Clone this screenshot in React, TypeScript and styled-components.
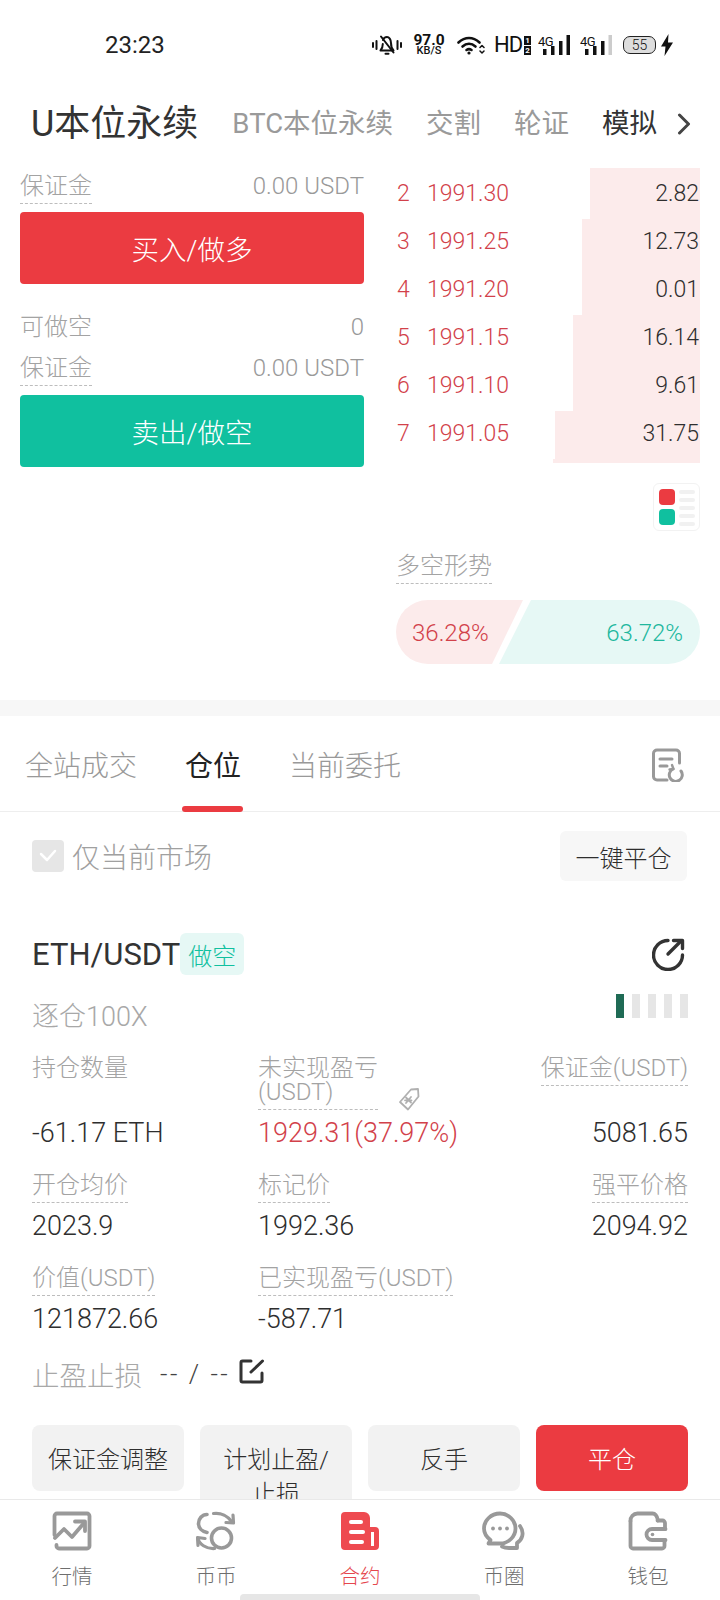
import React from "react";
import styled, { createGlobalStyle } from "styled-components";

const RED = "#eb3b41";
const GREEN = "#10c09f";
const PRICE = "#d2414a";
const GREY = "#a3a3a3";
const DARK = "#2e2e2e";

const Global = createGlobalStyle`
  html, body { margin: 0; padding: 0; background: #fff; }
  * { box-sizing: border-box; }
  body { font-family: Roboto, "Noto Sans CJK SC", sans-serif; font-weight: 300; color: ${DARK}; }
`;

const Page = styled.div`
  width: 720px; height: 1600px; overflow: hidden; display: flex; flex-direction: column; background: #fff;
`;
const Main = styled.main`
  flex: 1; min-height: 0; overflow: hidden;
`;
const StatusBar = styled.div`
  height: 92px; display: flex; align-items: center; padding: 0 47px 2px 105px;
`;
const Clock = styled.span`
  font-size: 24px; font-weight: 400; color: #222;
`;
const StatusIcons = styled.div`
  margin-left: auto; display: flex; align-items: center; gap: 11px; color: #111;
`;
const Speed = styled.div`
  width: 32px; margin-right: 1px; display: flex; flex-direction: column; align-items: center; font-weight: 700; color: #111;
`;
const SpeedValue = styled.span`
  font-size: 15.5px; line-height: 12px;
`;
const SpeedUnit = styled.span`
  font-size: 11px; line-height: 10px; font-weight: 500;
`;
const WifiSlot = styled.span`
  display: flex; margin-right: -2px;
`;
const SignalSlot = styled.span<{ $tight?: boolean }>`
  display: flex; margin-right: ${(p) => (p.$tight ? -1 : 0)}px;
`;
const Hd = styled.div`
  display: flex; align-items: center; gap: 1px; width: 33px; font-size: 22px; font-weight: 400; line-height: 22px; color: #111; letter-spacing: -1px;
`;
const SimStack = styled.div`
  display: flex; flex-direction: column; gap: 1px; margin-left: 1px;
`;
const SimDigit = styled.span`
  width: 7px; height: 9px; background: #111; color: #fff; font-size: 8px; line-height: 9px; text-align: center; letter-spacing: 0; font-weight: 700;
`;
const Battery = styled.div`
  position: relative; width: 33px; height: 18px; border: 1.5px solid #222; border-radius: 7px; background: #ddd; display: flex; align-items: center; justify-content: center; font-size: 14px; font-weight: 300; color: #111;
`;
const Bolt = styled.svg`
  margin-left: -6px;
`;

const TopTabs = styled.nav`
  height: 60px; padding-top: 3px; display: flex; align-items: center; gap: 33px; padding-left: 31px;
`;
const TopTab = styled.span<{ $state?: "main" | "dark" }>`
  font-size: ${(p) => (p.$state === "main" ? 36 : 27.5)}px;
  font-weight: 400;
  line-height: 40px;
  margin-right: ${(p) => (p.$state === "main" ? 1 : 0)}px;
  color: ${(p) => (p.$state ? "#333" : "#9a9a9a")};
  white-space: nowrap;
`;
const Chevron = styled.svg`
  margin-left: -13px;
`;

const Trade = styled.section`
  margin-top: 16px; height: 532px; padding-left: 20px; display: flex; gap: 32px;
`;
const OrderCol = styled.div`
  width: 344px; padding-top: 6px; display: flex; flex-direction: column;
`;
const InfoRow = styled.div<{ $gap?: number }>`
  display: flex; justify-content: space-between; align-items: flex-start; margin-top: ${(p) => p.$gap ?? 0}px;
`;
const Hint = styled.span`
  font-size: 24px; line-height: 24px; color: ${GREY};
`;
const Dashed = styled.span`
  display: inline-block; font-size: 24px; line-height: 24px; color: ${GREY}; padding-bottom: 5px; border-bottom: 1px dashed #bdbdbd; white-space: nowrap;
`;
const InfoValue = styled.span`
  font-size: 24px; line-height: 24px; color: #999;
`;
const TradeButton = styled.button<{ $side: "buy" | "sell" }>`
  display: block; width: 100%; height: 72px; margin-top: ${(p) => (p.$side === "buy" ? 8 : 9)}px; border: 0; border-radius: 4px; color: #fff; font: inherit; font-size: 27.5px;
  background: ${(p) => (p.$side === "buy" ? RED : GREEN)};
`;

const BookCol = styled.div`
  width: 304px; display: flex; flex-direction: column;
`;
const Book = styled.div`
  height: 295px; overflow: hidden; display: flex; flex-direction: column;
`;
const BookRow = styled.div<{ $first?: boolean }>`
  position: relative; flex: none; height: ${(p) => (p.$first ? 51 : 48)}px; padding: ${(p) => (p.$first ? "3px 1px 4px" : "0 1px 4px")};
  display: flex; align-items: center; font-size: 23px;
`;
const Depth = styled.div`
  position: absolute; right: 0; top: 0; bottom: 0; background: #fcebeb;
`;
const Level = styled.span`
  position: relative; width: 30px; color: ${PRICE};
`;
const Price = styled.span`
  position: relative; color: ${PRICE};
`;
const Qty = styled.span`
  position: relative; margin-left: auto; color: #2e2e2e;
`;
const LayoutToggle = styled.div`
  align-self: flex-end; margin-top: 20px; width: 47px; height: 48px; border: 1px solid #f2f2f2; border-radius: 6px; padding: 5px 5px; display: grid; grid-template-columns: 16px 16px; column-gap: 4px;
`;
const Swatches = styled.div`
  display: flex; flex-direction: column; gap: 4px;
`;
const Swatch = styled.i<{ $c: string }>`
  display: block; width: 16px; height: 16px; border-radius: 4px; background: ${(p) => p.$c};
`;
const Lines = styled.div`
  display: flex; flex-direction: column; gap: 4px; padding-top: 1px;
`;
const Line = styled.i`
  display: block; width: 16px; height: 4px; border-radius: 2px; background: #f1f1f1;
`;
const TrendTitle = styled.div`
  margin-top: 23px;
`;
const Ratio = styled.div`
  margin-top: 16px; height: 64px; display: flex; font-size: 24px;
`;
const RatioLong = styled.div`
  width: 127px; padding: 2px 0 0 16px; border-radius: 32px 0 0 32px; background: #fcebeb; color: ${PRICE}; display: flex; align-items: center;
  clip-path: polygon(0 0, 100% 0, calc(100% - 31px) 100%, 0 100%);
`;
const RatioShort = styled.div`
  width: 201px; margin-left: -24px; padding: 2px 17px 0 0; border-radius: 0 32px 32px 0; background: #e6f8f5; color: #20b79d; display: flex; align-items: center; justify-content: flex-end;
  clip-path: polygon(32px 0, 100% 0, 100% 100%, 0 100%);
`;

const Band = styled.div`
  height: 16px; background: #f7f7f7;
`;
const ListTabs = styled.div`
  height: 96px; display: flex; gap: 48px; padding: 0 36px 0 25px; border-bottom: 1px solid #eee;
`;
const ListTab = styled.div<{ $active?: boolean }>`
  position: relative; height: 96px; padding-top: 33px; font-size: 28px; line-height: 36px; font-weight: ${(p) => (p.$active ? 400 : 300)}; color: ${(p) => (p.$active ? "#222" : "#999")};
  ${(p) =>
    p.$active &&
    `&::after { content: ""; position: absolute; left: -3px; right: -2px; bottom: 0; height: 6px; border-radius: 3px; background: ${RED}; }`}
`;
const DocIcon = styled.svg`
  margin: 32px 0 0 auto;
`;

const FilterRow = styled.div`
  margin-top: 19px; padding: 0 33px 0 32px; display: flex; align-items: center; justify-content: space-between;
`;
const CheckLabel = styled.label`
  display: flex; align-items: center; gap: 8px; color: #a0a0a0;
`;
const CheckText = styled.span`
  margin-top: 6px; font-size: 28px; line-height: 36px;
`;
const CheckBox = styled.span`
  width: 32px; height: 32px; border-radius: 4px; background: #e6e6e6; display: flex; align-items: center; justify-content: center;
`;
const CloseAll = styled.button`
  width: 127px; height: 50px; border: 0; border-radius: 6px; background: #f7f7f7; font: inherit; font-size: 24px; color: ${DARK};
`;

const Position = styled.article`
  margin-top: 52px; padding: 0 32px;
`;
const PositionHead = styled.header`
  display: flex; justify-content: space-between; align-items: flex-start;
`;
const HeadLeft = styled.div`
  display: flex; flex-direction: column; gap: 27px;
`;
const HeadRight = styled.div`
  display: flex; flex-direction: column; align-items: flex-end; padding-top: 5px; gap: 23px;
`;
const ShareIcon = styled.svg`
  margin-right: 3px;
`;
const TitleRow = styled.div`
  height: 42px; display: flex; align-items: center;
`;
const Symbol = styled.h2`
  margin: 0; font-size: 31px; font-weight: 400; color: #333;
`;
const SideTag = styled.span`
  width: 64px; height: 42px; border-radius: 6px; background: #e6f8f5; color: ${GREEN}; font-size: 24px; display: flex; align-items: center; justify-content: center;
`;
const Mode = styled.div`
  font-size: 27px; line-height: 30px; color: #a8a8a8;
`;
const Risk = styled.div`
  display: flex; gap: 8px;
`;
const RiskBar = styled.i<{ $on?: boolean }>`
  display: block; width: 8px; height: 24px; background: ${(p) => (p.$on ? "#1f6b55" : "#e6e6e6")};
`;
const Stats = styled.div`
  margin-top: 24px; display: grid; grid-template-columns: 226px 1fr auto; row-gap: 25px;
`;
const Stat = styled.div<{ $right?: boolean }>`
  position: relative; display: flex; flex-direction: column; align-items: ${(p) => (p.$right ? "flex-end" : "flex-start")};
`;
const PlainLabel = styled.span`
  font-size: 24px; line-height: 24px; color: ${GREY};
`;
const StatValue = styled.span<{ $gain?: boolean }>`
  margin-top: auto; padding-top: 8px; font-size: 27px; line-height: 30px; color: ${(p) => (p.$gain ? PRICE : DARK)}; white-space: nowrap;
`;
const TagIcon = styled.svg`
  position: absolute; left: 140px; top: 31px;
`;
const StopRow = styled.div`
  margin-top: 22px; display: flex; align-items: center; height: 36px; font-size: 27.5px; color: #a8a8a8;
`;
const StopValue = styled.span`
  margin-left: 18px; font-size: 26px; color: #444; letter-spacing: 2.5px;
`;
const EditIcon = styled.svg`
  margin: -6px 0 0 9px;
`;
const Actions = styled.div`
  margin-top: 33px; display: grid; grid-template-columns: repeat(4, 152px); gap: 16px; align-items: start;
`;
const Action = styled.button<{ $danger?: boolean }>`
  min-height: 66px; padding: 18px 16px 14px; border: 0; border-radius: 8px; font: inherit; font-size: 24px; line-height: 34px; text-align: center;
  background: ${(p) => (p.$danger ? RED : "#f2f2f2")}; color: ${(p) => (p.$danger ? "#fff" : DARK)};
`;

const BottomNav = styled.footer`
  flex: none; height: 101px; border-top: 1px solid #e9e9e9; background: #fff; display: flex; flex-direction: column; align-items: center;
`;
const NavItems = styled.div`
  width: 100%; padding-top: 11px; display: grid; grid-template-columns: repeat(5, 1fr);
`;
const NavItem = styled.div<{ $active?: boolean }>`
  display: flex; flex-direction: column; align-items: center; gap: 14px; font-size: 20.5px; line-height: 28px; color: ${(p) => (p.$active ? "#e5474e" : "#6e6e6e")};
`;
const NavGlyph = styled.span`
  display: block; height: 38px; color: #999;
`;
const HomeBar = styled.div`
  margin-top: 3px; width: 240px; height: 6px; border-radius: 4px 4px 0 0; background: #e6e6e6;
`;

const S = { fill: "none", stroke: "currentColor", strokeLinecap: "round" as const, strokeLinejoin: "round" as const };

const MuteBell = () => (
  <svg width="30" height="20" viewBox="0 0 30 20" {...S} strokeWidth={2}>
    <path d="M1 8v4M4.500 6v8M25.500 6v8M29 8v4" />
    <path d="M8.500 15.500h13c-2-2-2.500-4-2.500-7.500 0-3.500-2-6-4-6-1.800 0-3.300 1-4 3M10.800 9c0 3-1 5-2.300 6.500" />
    <path d="M9 1.500l12.500 16" />
    <path d="M13.500 18.800h3" />
  </svg>
);
const Wifi = () => (
  <svg width="28" height="20" viewBox="0 0 28 20" {...S} strokeWidth={2.6}>
    <path d="M1.500 7.500C8 1.500 16 1.500 22.500 7.500" />
    <path d="M5.500 11.500C9.500 8 14.500 8 18.500 11.500" />
    <path d="M9.500 15C11 14 13 14 14.500 15" />
    <circle cx="12" cy="18" r="1.600" fill="currentColor" stroke="none" />
    <path d="M23 12.500l2-2 2 2M23 16l2 2 2-2" strokeWidth={1.500} />
  </svg>
);
const Signal = ({ last }: { last?: boolean }) => (
  <svg width="32" height="21" viewBox="0 0 32 21">
    <text x="0" y="10.500" fontSize="13" fontWeight="400" fill="#111" fontFamily="Roboto, sans-serif" letterSpacing="-0.500">4G</text>
    <rect x="5" y="14" width="3.500" height="6" fill="#111" />
    <rect x="13" y="11" width="3.500" height="9" fill="#111" />
    <rect x="21" y="6" width="3.500" height="14" fill="#111" />
    <rect x="28.500" y="0" width="3.500" height="20" fill={last ? "#ccc" : "#111"} />
  </svg>
);

const IconMarket = () => (
  <svg width="40" height="40" viewBox="0 0 40 40" fill="none" stroke="currentColor" strokeWidth="3.800" strokeLinecap="round" strokeLinejoin="round">
    <path d="M2.500 24V5a2.500 2.500 0 0 1 2.500-2.500h30a2.500 2.500 0 0 1 2.500 2.500v30a2.500 2.500 0 0 1-2.500 2.500H7a2.500 2.500 0 0 1-2.500-2.500v-1" />
    <path d="M3 27l9-9 8 8 12-14" />
    <path d="M23 10.500h10v9.500" />
  </svg>
);
const IconSpot = () => (
  <svg width="40" height="40" viewBox="0 0 40 40" fill="none" stroke="currentColor" strokeWidth="3.600" strokeLinecap="round" strokeLinejoin="round">
    <path d="M11 3.500C6 3.500 2.500 8 2.500 12.500 2.500 17 6 20.500 11 21.500" />
    <circle cx="25.500" cy="27" r="10" />
    <path d="M17.500 2.500C25 1.500 32 5 36 11" strokeWidth="3.200" />
    <path d="M37 4l.5 8-7.500-.5" strokeWidth="3.200" />
    <path d="M2 27.500C3 33 10 38 18.500 37.500" strokeWidth="3.200" />
    <path d="M2 34.500l-.5-8 7.500 1" strokeWidth="3.200" />
  </svg>
);
const IconFutures = () => (
  <svg width="40" height="40" viewBox="0 0 40 40">
    <path fill="#ee4a50" d="M5 1h19a6 6 0 0 1 6 6v9h5a4 4 0 0 1 4 4v15a4 4 0 0 1-4 4H5a4 4 0 0 1-4-4V5a4 4 0 0 1 4-4z" />
    <rect x="9" y="9" width="14" height="4" rx="2" fill="#fff" />
    <rect x="9" y="19" width="16" height="4" rx="2" fill="#fff" />
    <rect x="9" y="29" width="15" height="4" rx="2" fill="#fff" />
    <rect x="31" y="21" width="3" height="14" fill="#fff" />
  </svg>
);
const IconCircle = () => (
  <svg width="44" height="40" viewBox="0 0 44 40" fill="none" stroke="currentColor" strokeWidth="3.800" strokeLinecap="round" strokeLinejoin="round">
    <path d="M18 2.500c8.500 0 15.500 7 15.500 15s-7 15-15.500 15H6.500l2-3.500C4.500 26 2 22 2 17.500c0-8 7-15 16-15z" />
    <circle cx="11" cy="17.500" r="1.900" fill="currentColor" stroke="none" />
    <circle cx="18" cy="17.500" r="1.900" fill="currentColor" stroke="none" />
    <circle cx="25" cy="17.500" r="1.900" fill="currentColor" stroke="none" />
    <path d="M38 15c5 7 2 14-3 17v5H27c-3 0-5-.5-7-1.500" />
  </svg>
);
const IconWallet = () => (
  <svg width="40" height="40" viewBox="0 0 40 40" fill="none" stroke="currentColor" strokeWidth="3.800" strokeLinecap="round" strokeLinejoin="round">
    <path d="M2.500 10v25a2.500 2.500 0 0 0 2.500 2.500h29a2.500 2.500 0 0 0 2.500-2.500V29" />
    <path d="M37 18v-6a2.500 2.500 0 0 0-2.500-2.500H29.500" />
    <path d="M2.500 10a7 7 0 0 1 7-7.500h15c3 0 4.500 2 5.500 7" />
    <path d="M37.500 18H24a5.500 5.500 0 0 0 0 11h13.500" />
    <circle cx="24.500" cy="23.500" r="1.800" fill="currentColor" stroke="none" />
  </svg>
);

const book = [
  { n: 2, p: "1991.30", q: "2.82", d: 110 },
  { n: 3, p: "1991.25", q: "12.73", d: 118 },
  { n: 4, p: "1991.20", q: "0.01", d: 118 },
  { n: 5, p: "1991.15", q: "16.14", d: 127 },
  { n: 6, p: "1991.10", q: "9.61", d: 127 },
  { n: 7, p: "1991.05", q: "31.75", d: 145 },
];

export default function App() {
  return (
    <Page>
      <Global />
      <Main>
        <StatusBar>
          <Clock>23:23</Clock>
          <StatusIcons>
            <MuteBell />
            <Speed>
              <SpeedValue>97.0</SpeedValue>
              <SpeedUnit>KB/S</SpeedUnit>
            </Speed>
            <WifiSlot>
              <Wifi />
            </WifiSlot>
            <Hd>
              HD
              <SimStack>
                <SimDigit>1</SimDigit>
                <SimDigit>2</SimDigit>
              </SimStack>
            </Hd>
            <SignalSlot $tight>
              <Signal />
            </SignalSlot>
            <SignalSlot>
              <Signal last />
            </SignalSlot>
            <Battery>55</Battery>
            <Bolt width="12" height="22" viewBox="0 0 12 22">
              <path d="M7.500 0L0 12.500h4.500L3.500 22 12 8.500H7z" fill="#111" />
            </Bolt>
          </StatusIcons>
        </StatusBar>

        <TopTabs>
          <TopTab $state="main">U本位永续</TopTab>
          <TopTab>BTC本位永续</TopTab>
          <TopTab>交割</TopTab>
          <TopTab>轮证</TopTab>
          <TopTab $state="dark">模拟</TopTab>
          <Chevron width="14" height="22" viewBox="0 0 14 22" fill="none" stroke="#444" strokeWidth="3" strokeLinecap="round" strokeLinejoin="round">
            <path d="M2.500 2l9 9-9 9" />
          </Chevron>
        </TopTabs>

        <Trade>
          <OrderCol>
            <InfoRow>
              <Dashed>保证金</Dashed>
              <InfoValue>0.00 USDT</InfoValue>
            </InfoRow>
            <TradeButton $side="buy">买入/做多</TradeButton>
            <InfoRow $gap={31}>
              <Hint>可做空</Hint>
              <InfoValue>0</InfoValue>
            </InfoRow>
            <InfoRow $gap={17}>
              <Dashed>保证金</Dashed>
              <InfoValue>0.00 USDT</InfoValue>
            </InfoRow>
            <TradeButton $side="sell">卖出/做空</TradeButton>
          </OrderCol>

          <BookCol>
            <Book>
              {book.map((r, i) => (
                <BookRow key={r.n} $first={i === 0}>
                  <Depth style={{ width: r.d }} />
                  <Level>{r.n}</Level>
                  <Price>{r.p}</Price>
                  <Qty>{r.q}</Qty>
                </BookRow>
              ))}
              <BookRow>
                <Depth style={{ width: 147 }} />
              </BookRow>
            </Book>
            <LayoutToggle>
              <Swatches>
                <Swatch $c={RED} />
                <Swatch $c={GREEN} />
              </Swatches>
              <Lines>
                <Line />
                <Line />
                <Line />
                <Line />
                <Line />
              </Lines>
            </LayoutToggle>
            <TrendTitle>
              <Dashed>多空形势</Dashed>
            </TrendTitle>
            <Ratio>
              <RatioLong>36.28%</RatioLong>
              <RatioShort>63.72%</RatioShort>
            </Ratio>
          </BookCol>
        </Trade>

        <Band />

        <ListTabs>
          <ListTab>全站成交</ListTab>
          <ListTab $active>仓位</ListTab>
          <ListTab>当前委托</ListTab>
          <DocIcon width="32" height="34" viewBox="0 0 32 34" fill="none" stroke="#999" strokeWidth="3" strokeLinecap="round" strokeLinejoin="round">
            <path d="M15 32H5a3.500 3.500 0 0 1-3.500-3.500v-23A3.500 3.500 0 0 1 5 2h19a3.500 3.500 0 0 1 3.500 3.500V15" />
            <path d="M8 11h12M8 18h7" />
            <path d="M21 21a6.500 6.500 0 1 0 8 2" />
            <path d="M20 17l1.500 4-4 .5" strokeWidth="2.400" />
          </DocIcon>
        </ListTabs>

        <FilterRow>
          <CheckLabel>
            <CheckBox>
              <svg width="18" height="14" viewBox="0 0 18 14" fill="none" stroke="#fff" strokeWidth="2.500" strokeLinecap="round" strokeLinejoin="round">
                <path d="M2 5l6 6 8-9" />
              </svg>
            </CheckBox>
            <CheckText>仅当前市场</CheckText>
          </CheckLabel>
          <CloseAll>一键平仓</CloseAll>
        </FilterRow>

        <Position>
          <PositionHead>
            <HeadLeft>
              <TitleRow>
                <Symbol>ETH/USDT</Symbol>
                <SideTag>做空</SideTag>
              </TitleRow>
              <Mode>逐仓100X</Mode>
            </HeadLeft>
            <HeadRight>
              <ShareIcon width="33" height="33" viewBox="0 0 33 33" fill="none" stroke="#333" strokeWidth="3.400" strokeLinecap="round" strokeLinejoin="round">
                <path d="M16 2.500A14.500 14.500 0 1 0 30.500 17" />
                <path d="M16 16L29 3" />
                <path d="M21.500 2.500h9v8" />
              </ShareIcon>
              <Risk>
                <RiskBar $on />
                <RiskBar />
                <RiskBar />
                <RiskBar />
                <RiskBar />
              </Risk>
            </HeadRight>
          </PositionHead>

          <Stats>
            <Stat>
              <PlainLabel>持仓数量</PlainLabel>
              <StatValue>-61.17 ETH</StatValue>
            </Stat>
            <Stat>
              <Dashed>
                未实现盈亏
                <br />
                (USDT)
              </Dashed>
              <TagIcon width="22" height="25" viewBox="0 0 22 25" fill="none" stroke="#b0b0b0" strokeWidth="1.800" strokeLinecap="round" strokeLinejoin="round">
                <path d="M2 15L13 2.500l7-.5.5 7.500L10 22.500z" />
                <path d="M8 10.500l5 5M13 10l-5 6M7 13.300h6.500" />
              </TagIcon>
              <StatValue $gain>1929.31(37.97%)</StatValue>
            </Stat>
            <Stat $right>
              <Dashed>保证金(USDT)</Dashed>
              <StatValue>5081.65</StatValue>
            </Stat>

            <Stat>
              <Dashed>开仓均价</Dashed>
              <StatValue>2023.9</StatValue>
            </Stat>
            <Stat>
              <Dashed>标记价</Dashed>
              <StatValue>1992.36</StatValue>
            </Stat>
            <Stat $right>
              <Dashed>强平价格</Dashed>
              <StatValue>2094.92</StatValue>
            </Stat>

            <Stat>
              <Dashed>价值(USDT)</Dashed>
              <StatValue>121872.66</StatValue>
            </Stat>
            <Stat>
              <Dashed>已实现盈亏(USDT)</Dashed>
              <StatValue>-587.71</StatValue>
            </Stat>
          </Stats>

          <StopRow>
            止盈止损
            <StopValue>-- / --</StopValue>
            <EditIcon width="26" height="25" viewBox="0 0 26 25" fill="none" stroke="#333" strokeWidth="3" strokeLinecap="round" strokeLinejoin="round">
              <path d="M12 2H3.500A1.500 1.500 0 0 0 2 3.500v18A1.500 1.500 0 0 0 3.500 23h18a1.500 1.500 0 0 0 1.500-1.500V14" />
              <path d="M12 13L23.500 2" />
            </EditIcon>
          </StopRow>

          <Actions>
            <Action>保证金调整</Action>
            <Action>计划止盈/止损</Action>
            <Action>反手</Action>
            <Action $danger>平仓</Action>
          </Actions>
        </Position>
      </Main>

      <BottomNav>
        <NavItems>
          <NavItem>
            <NavGlyph><IconMarket /></NavGlyph>
            行情
          </NavItem>
          <NavItem>
            <NavGlyph><IconSpot /></NavGlyph>
            币币
          </NavItem>
          <NavItem $active>
            <NavGlyph><IconFutures /></NavGlyph>
            合约
          </NavItem>
          <NavItem>
            <NavGlyph><IconCircle /></NavGlyph>
            币圈
          </NavItem>
          <NavItem>
            <NavGlyph><IconWallet /></NavGlyph>
            钱包
          </NavItem>
        </NavItems>
        <HomeBar />
      </BottomNav>
    </Page>
  );
}
